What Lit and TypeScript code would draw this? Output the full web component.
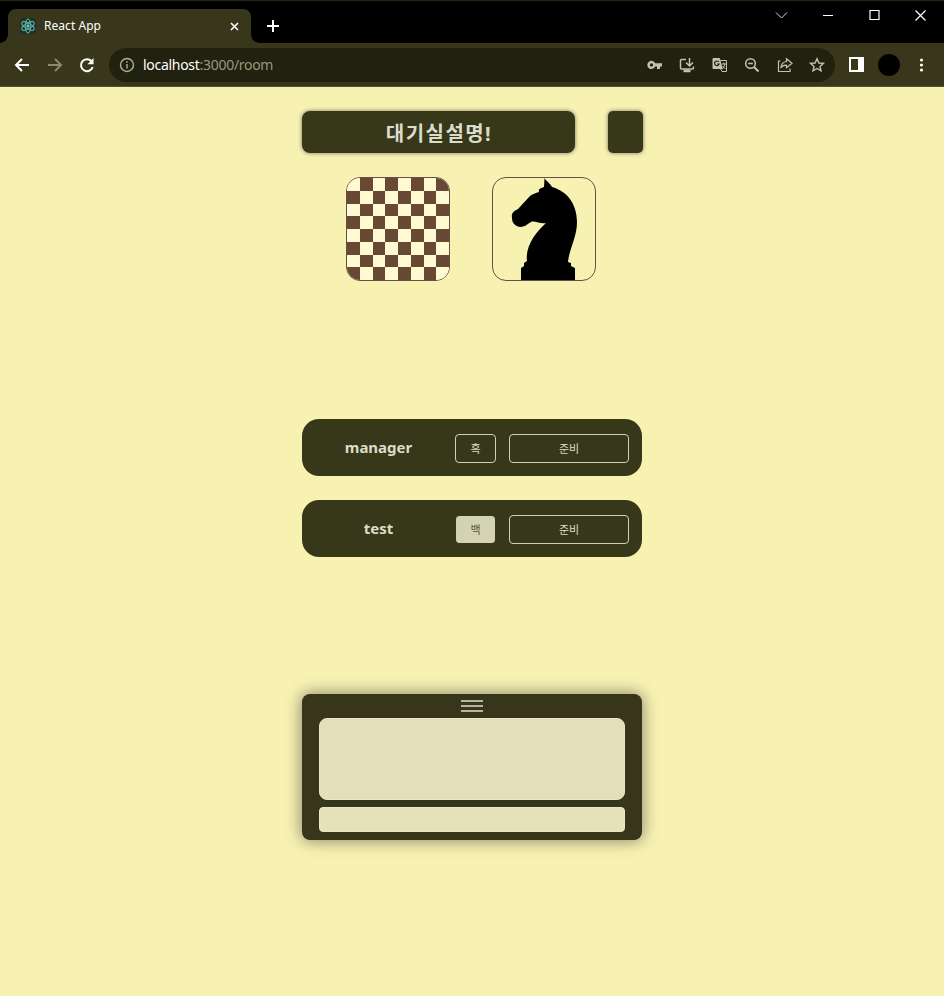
import { LitElement, html, css, svg } from "lit";
import { customElement } from "lit/decorators.js";

const squares = Array.from({ length: 64 }, (_, i) => i).filter((i) => ((i % 8) + Math.floor(i / 8)) % 2 === 1);

@customElement("app-root")
export class AppRoot extends LitElement {
  static styles = css`
    :host { display: block; width: 944px; height: 996px; background: #f8f2b2; font-family: "Noto Sans", "Noto Sans CJK KR", sans-serif; overflow: hidden; }
    * { box-sizing: border-box; }
    svg { display: block; flex: none; overflow: visible; }
    .tabs { height: 43px; background: #000; border-top: 1px solid #25250f; display: flex; align-items: flex-start; color: #fff; }
    .tab { position: relative; width: 243px; height: 34px; margin: 8px 0 0 8px; background: #38371c; border-radius: 8px 8px 0 0; display: flex; align-items: center; padding: 0 12px 0 12px; font-size: 12px; }
    .tab::before, .tab::after { content: ""; position: absolute; bottom: 0; width: 8px; height: 8px; }
    .tab::before { left: -8px; background: radial-gradient(circle at 0 0, transparent 7.5px, #38371c 8px); }
    .tab::after { right: -8px; background: radial-gradient(circle at 100% 0, transparent 7.5px, #38371c 8px); }
    .title { margin-left: 8px; flex: 1; letter-spacing: 0.05px; padding-bottom: 1px; }
    .plus { margin: 19px 0 0 16px; }
    .win { margin-left: auto; padding: 7px 17px 0 0; display: flex; gap: 32px; }
    .bar { height: 44px; background: #38371c; border-bottom: 1px solid #55552c; display: flex; align-items: center; padding-left: 14px; color: #fff; }
    .nav { display: flex; gap: 16px; }
    .dim { color: #898974; }
    .url { width: 726px; height: 34px; margin-left: 13px; border-radius: 17px; background: #21210f; display: flex; align-items: center; padding: 0 10px; color: #c2c2af; }
    .address { font-size: 14px; margin-left: 8px; flex: 1; color: #98987f; letter-spacing: -0.29px; }
    .address b { color: #fff; font-weight: 400; }
    .tools { display: flex; gap: 16.4px; }
    .panel { margin-left: 14px; }
    .avatar { width: 22px; height: 22px; border-radius: 50%; background: #000; margin-left: 14px; }
    .more { margin-left: 13px; }
    main { width: 340px; margin: 24px auto 0; }
    .head { display: flex; justify-content: space-between; height: 42px; width: 341px; }
    .name, .side { background: #37371a; border-radius: 8px; box-shadow: 0 0 4px #383838b0; }
    .name { width: 273px; color: #dcdcca; font-size: 20px; font-weight: 700; letter-spacing: 1.45px; padding-left: 1px; display: flex; align-items: center; justify-content: center; }
    .side { width: 35px; border-radius: 5px; }
    .pieces { display: flex; gap: 42px; margin: 24px 0 0 44px; }
    .piece { width: 104px; height: 104px; border: 1px solid #684f46; border-radius: 14px; overflow: hidden; }
    .players { margin-top: 138px; display: grid; gap: 24px; }
    .player { height: 57px; border-radius: 17px; background: #37371a; color: #dcdcca; display: flex; align-items: center; padding: 0 13px 0 0; }
    .who { width: 153px; text-align: center; font-weight: 700; font-size: 15px; padding-bottom: 2px; }
    .btn { height: 29px; border: 1px solid #d0d0ba; border-radius: 4px; font-size: 11px; display: flex; align-items: center; justify-content: center; margin-top: 2px; padding-bottom: 2px; }
    .colour { width: 41px; margin-right: 13px; }
    .white { width: 39px; height: 27px; margin-left: 1px; margin-right: 14px; background: #d3d3b4; color: #55553c; border-radius: 3px; }
    .ready { flex: 1; }
    .chat { margin-top: 137px; height: 146px; border-radius: 8px; background: #37361a; box-shadow: 0 0 16px 1px #38383890; padding: 5px 17px 8px; display: flex; flex-direction: column; }
    .grip { width: 22px; height: 13px; margin: 0 auto 6px; display: flex; flex-direction: column; justify-content: space-between; padding: 1px 0 0; }
    .grip i { height: 2px; background: #b5b5a0; }
    .log { height: 82px; border-radius: 8px; background: #e3dfba; border: 1px solid #ebe7c3; }
    .entry { height: 25px; border-radius: 4px; background: #e5e1b9; border: 1px solid #ebe7c3; margin-top: 7px; }
  `;

  render() {
    return html`
      <div class="tabs">
        <div class="tab">
          <svg width="16" height="16" viewBox="0 0 16 16" fill="none" stroke="#61bfaf"><rect width="16" height="16" rx="3" fill="#22302a" stroke="none"/>
            ${[30, 90, 150].map((a) => svg`<ellipse cx="8" cy="8" rx="7" ry="2.8" transform="rotate(${a} 8 8)"/>`)}<circle cx="8" cy="8" r="1.2" fill="#9cecf4"/></svg>
          <span class="title">React App</span>
          <svg width="9" height="9" stroke="#fff" stroke-width="1.6"><path d="M1 1l7 7M8 1l-7 7"/></svg>
        </div>
        <svg class="plus" width="12" height="12" stroke="#fff" stroke-width="2"><path d="M6 0v12M0 6h12"/></svg>
        <div class="win">
          <svg width="15" height="14" fill="none" stroke="#ddd"><path d="M3 4.500l5.500 5.500 5.500-5.500"/></svg>
          <svg width="15" height="14" stroke="#fff"><path d="M3 7.500h10"/></svg>
          <svg width="15" height="14" fill="none" stroke="#fff" stroke-width="1.2"><path d="M3 2.500h9v9h-9z"/></svg>
          <svg width="13" height="14" stroke="#fff" stroke-width="1.2"><path d="M1.5 2.5l10 10M11.5 2.5l-10 10"/></svg>
        </div>
      </div>
      <div class="bar">
        <div class="nav">
          <svg width="16" height="16" fill="none" stroke="currentColor" stroke-width="2"><path d="M15 8H2M8 2L2 8l6 6"/></svg>
          <svg class="dim" width="16" height="16" fill="none" stroke="currentColor" stroke-width="2"><path d="M2 8h13M9 2l6 6-6 6"/></svg>
          <svg width="18" height="16" fill="none" stroke="currentColor" stroke-width="2"><path d="M13.5 4.2A6 6 0 1 0 14.7 10"/><path d="M15.500 1v6.200h-6z" fill="currentColor" stroke="none"/></svg>
        </div>
        <div class="url">
          <svg width="16" height="16" fill="none" stroke="#b0b09a" stroke-width="1.4"><circle cx="8" cy="8" r="6.500"/><path d="M8 7v4.500M8 4.200v1.500"/></svg>
          <span class="address"><b>localhost</b>:3000/room</span>
          <div class="tools">
            <svg width="16" height="16" fill="currentColor"><path fill-rule="evenodd" d="M8.200 6.300A4.100 4.100 0 1 0 8.200 9.500H10V12h3V9.500h2v-3.200zM4.500 6.300a1.600 1.600 0 1 1 0 3.200 1.600 1.600 0 0 1 0-3.200z"/></svg>
            <svg width="16" height="16" fill="none" stroke="currentColor" stroke-width="1.500"><path d="M7 2.500H2.500q-1 0-1 1V11q0 1 1 1h11q1 0 1-1V9.500M10.500 1v7M7 5.500l3.500 3.500 3.500-3.500"/><path d="M4.500 14h7" stroke-width="2.500"/></svg>
            <svg width="16" height="16" fill="none" stroke="currentColor" stroke-width="1"><path d="M1 1.500h6.500l2.500 10H1z" fill="currentColor"/><path d="M8.500 3.500h6v11H10l-1.500-3M9.500 7h4.500M12 5.500V7M13 7q-1 3-3 5M10.500 9l3 3"/><path d="M6.800 5a2.300 2.300 0 1 0 .3 2H5" stroke="#252515" stroke-width="1.200"/></svg>
            <svg width="16" height="16" fill="none" stroke="currentColor" stroke-width="1.500"><circle cx="6.500" cy="6.500" r="4.800"/><path d="M4.200 6.500h4.600"/><path d="M10 10l4.500 4.500" stroke-width="2"/></svg>
            <svg width="16" height="16" fill="none" stroke="currentColor" stroke-width="1.200"><path d="M3.500 4H1.500v10.500h11.500V11.500M9.500 1.800l5.500 4.500-5.500 4.400V8.200Q5.500 8 3.800 11q.7-6 5.700-6.500z"/></svg>
            <svg width="16" height="16" fill="none" stroke="currentColor" stroke-width="1.400"><path d="M8 1.800l1.900 4.200 4.500.4-3.400 3 1 4.500-4-2.400-4 2.400 1-4.500-3.400-3 4.500-.4z"/></svg>
          </div>
        </div>
        <svg class="panel" width="15" height="15"><path fill="#fff" fill-rule="evenodd" d="M0 0h15v15H0zM2 2v11h7V2z"/></svg>
        <div class="avatar"></div>
        <svg class="more" width="16" height="16" fill="#fff"><circle cx="8.500" cy="3" r="1.600"/><circle cx="8.500" cy="8" r="1.600"/><circle cx="8.500" cy="13" r="1.600"/></svg>
      </div>
      <main>
        <div class="head"><div class="name">대기실설명!</div><div class="side"></div></div>
        <div class="pieces">
          <div class="piece"><svg width="102" height="102" viewBox="0 0 8 8" shape-rendering="crispEdges"><path fill="#fffad2" d="M0 0h8v8H0z"/>
            ${squares.map((i) => svg`<rect x=${i % 8} y=${Math.floor(i / 8)} width="1" height="1" fill="#684a34"/>`)}</svg></div>
          <div class="piece"><svg width="102" height="102"><path d="M51.500 0C52 2 57 5 59 9C74 13 84 26 84 44C84 59 76 72 75 84L78 85V88L82 90V102H28V90L31 88V85L34 83C32 68 43 54 53 45C48 46 43 43 39 43.500C35 45 33 49 27 49C22 48 19 45 19 40C18 35 21 33 25 31L37 18C39 16 43 15 46 14C45 11 48 10 51 9Z"/></svg></div>
        </div>
        <div class="players">
          <div class="player"><div class="who">manager</div><div class="btn colour">흑</div><div class="btn ready">준비</div></div>
          <div class="player"><div class="who">test</div><div class="btn colour white">백</div><div class="btn ready">준비</div></div>
        </div>
        <div class="chat"><div class="grip"><i></i><i></i><i></i></div><div class="log"></div><div class="entry"></div></div>
      </main>
    `;
  }
}
